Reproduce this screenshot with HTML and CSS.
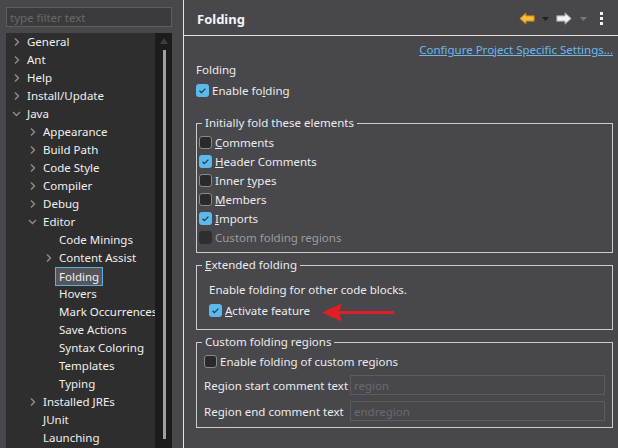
FILE: index.html
```html
<!DOCTYPE html>
<html>
<head>
<meta charset="utf-8">
<link rel="stylesheet" href="styles.css">
</head>
<body>
<div class="app">
  <aside class="side">
    <input class="filter" type="text" placeholder="type filter text">
    <div class="tree">
      <ul class="rows">
        <li class="row l0"><span class="tw"><svg width="6" height="10" viewBox="0 0 6 10"><polyline points="1,1.5 4.5,5 1,8.5" class="chev"/></svg></span>General</li>
        <li class="row l0"><span class="tw"><svg width="6" height="10" viewBox="0 0 6 10"><polyline points="1,1.5 4.5,5 1,8.5" class="chev"/></svg></span>Ant</li>
        <li class="row l0"><span class="tw"><svg width="6" height="10" viewBox="0 0 6 10"><polyline points="1,1.5 4.5,5 1,8.5" class="chev"/></svg></span>Help</li>
        <li class="row l0"><span class="tw"><svg width="6" height="10" viewBox="0 0 6 10"><polyline points="1,1.5 4.5,5 1,8.5" class="chev"/></svg></span>Install/Update</li>
        <li class="row l0"><span class="tw open"><svg width="9" height="6" viewBox="0 0 9 6"><polyline points="1,1 4.5,4.5 8,1" class="chev"/></svg></span>Java</li>
        <li class="row l1"><span class="tw"><svg width="6" height="10" viewBox="0 0 6 10"><polyline points="1,1.5 4.5,5 1,8.5" class="chev"/></svg></span>Appearance</li>
        <li class="row l1"><span class="tw"><svg width="6" height="10" viewBox="0 0 6 10"><polyline points="1,1.5 4.5,5 1,8.5" class="chev"/></svg></span>Build Path</li>
        <li class="row l1"><span class="tw"><svg width="6" height="10" viewBox="0 0 6 10"><polyline points="1,1.5 4.5,5 1,8.5" class="chev"/></svg></span>Code Style</li>
        <li class="row l1"><span class="tw"><svg width="6" height="10" viewBox="0 0 6 10"><polyline points="1,1.5 4.5,5 1,8.5" class="chev"/></svg></span>Compiler</li>
        <li class="row l1"><span class="tw"><svg width="6" height="10" viewBox="0 0 6 10"><polyline points="1,1.5 4.5,5 1,8.5" class="chev"/></svg></span>Debug</li>
        <li class="row l1"><span class="tw open"><svg width="9" height="6" viewBox="0 0 9 6"><polyline points="1,1 4.5,4.5 8,1" class="chev"/></svg></span>Editor</li>
        <li class="row l2"><span class="tw"></span>Code Minings</li>
        <li class="row l2"><span class="tw"><svg width="6" height="10" viewBox="0 0 6 10"><polyline points="1,1.5 4.5,5 1,8.5" class="chev"/></svg></span>Content Assist</li>
        <li class="row l2"><span class="tw"></span><span class="sel">Folding</span></li>
        <li class="row l2"><span class="tw"></span>Hovers</li>
        <li class="row l2"><span class="tw"></span>Mark Occurrences</li>
        <li class="row l2"><span class="tw"></span>Save Actions</li>
        <li class="row l2"><span class="tw"></span>Syntax Coloring</li>
        <li class="row l2"><span class="tw"></span>Templates</li>
        <li class="row l2"><span class="tw"></span>Typing</li>
        <li class="row l1"><span class="tw"><svg width="6" height="10" viewBox="0 0 6 10"><polyline points="1,1.5 4.5,5 1,8.5" class="chev"/></svg></span>Installed JREs</li>
        <li class="row l1"><span class="tw"></span>JUnit</li>
        <li class="row l1"><span class="tw"></span>Launching</li>
      </ul>
      <div class="vscroll"><span class="up"></span><span class="thumb"></span></div>
    </div>
  </aside>

  <main class="page">
    <header class="head">
      <h1 class="title">Folding</h1>
      <div class="nav">
        <svg class="back" width="16" height="13" viewBox="0 0 16 13"><polygon points="0.8,6.5 7,0.8 7,3.8 15.2,3.8 15.2,9.2 7,9.2 7,12.2" fill="#f7bb3f" stroke="#b57613" stroke-width="1"/></svg>
        <svg class="dd" width="7" height="4" viewBox="0 0 7 4"><polygon points="0,0 7,0 3.5,4" fill="#1f1f21"/></svg>
        <svg class="fwd" width="16" height="13" viewBox="0 0 16 13"><polygon points="15.2,6.5 9,0.8 9,3.8 0.8,3.8 0.8,9.2 9,9.2 9,12.2" fill="#f2f2f2" stroke="#9c9c9c" stroke-width="1"/></svg>
        <svg class="dd" width="7" height="4" viewBox="0 0 7 4"><polygon points="0,0 7,0 3.5,4" fill="#78787c"/></svg>
        <svg class="dots" width="3" height="13" viewBox="0 0 3 13"><rect x="0" y="0" width="3" height="3" fill="#f2f2f2"/><rect x="0" y="5" width="3" height="3" fill="#f2f2f2"/><rect x="0" y="10" width="3" height="3" fill="#f2f2f2"/></svg>
      </div>
    </header>

    <div class="content">
      <a class="link">Configure Project Specific Settings...</a>
      <div class="lbl">Folding</div>
      <div class="check top"><span class="box on"><svg width="13" height="13" viewBox="0 0 13 13"><polyline points="3.5,6.8 5.4,8.6 9.4,4.6" class="tick"/></svg></span><span>Enable fo<u>l</u>ding</span></div>

      <fieldset class="grp">
        <legend>Initially fold these elements</legend>
        <div class="in1">
          <div class="check r19"><span class="box"></span><span><u>C</u>omments</span></div>
          <div class="check r19"><span class="box on"><svg width="13" height="13" viewBox="0 0 13 13"><polyline points="3.5,6.8 5.4,8.6 9.4,4.6" class="tick"/></svg></span><span><u>H</u>eader Comments</span></div>
          <div class="check r19"><span class="box"></span><span>Inner <u>t</u>ypes</span></div>
          <div class="check r19"><span class="box"></span><span><u>M</u>embers</span></div>
          <div class="check r19"><span class="box on"><svg width="13" height="13" viewBox="0 0 13 13"><polyline points="3.5,6.8 5.4,8.6 9.4,4.6" class="tick"/></svg></span><span><u>I</u>mports</span></div>
          <div class="check r19 dis"><span class="box off"></span><span>Custom folding regions</span></div>
        </div>
      </fieldset>

      <fieldset class="grp g2">
        <legend><u>E</u>xtended folding</legend>
        <div class="in2">
          <div class="txt">Enable folding for other code blocks.</div>
          <div class="check act"><span class="box on"><svg width="13" height="13" viewBox="0 0 13 13"><polyline points="3.5,6.8 5.4,8.6 9.4,4.6" class="tick"/></svg></span><span><u>A</u>ctivate feature</span>
            <svg class="redarrow" width="72" height="20" viewBox="0 0 72 20"><polygon points="0,9.5 20,0.5 17,9.5 20,18.5" fill="#e11d25"/><rect x="17" y="8" width="55" height="3" fill="#e11d25"/></svg>
          </div>
        </div>
      </fieldset>

      <fieldset class="grp g3">
        <legend>Custom folding regions</legend>
        <div class="in3">
          <div class="check"><span class="box"></span><span>Enable folding of custom regions</span></div>
          <div class="field f1"><span>Region start comment text</span><input type="text" placeholder="region"></div>
          <div class="field f2"><span>Region end comment text</span><input type="text" placeholder="endregion"></div>
        </div>
      </fieldset>
    </div>
  </main>
</div>
</body>
</html>
```

FILE: styles.css
```css
* { box-sizing: border-box; margin: 0; padding: 0; }
html, body { width: 618px; height: 448px; overflow: hidden; }
body {
  background: #48474c;
  font-family: "Noto Sans", "Open Sans", sans-serif;
  font-size: 11.5px;
  color: #ececec;
}
.app { display: flex; height: 448px; }

/* left side */
.side {
  width: 184px;
  flex: none;
  border-right: 1px solid #e2e2e2;
  padding: 7px 11px 0 6px;
  display: flex;
  flex-direction: column;
  gap: 6px;
}
.filter {
  height: 20px;
  border: 1px solid #5e5e60;
  background: #3b3b3d;
  color: #ddd;
  font: inherit;
  padding: 0 3px;
  outline: none;
}
.filter::placeholder { color: #68686a; }
.tree {
  flex: 1;
  min-height: 0;
  display: flex;
  background: #2e2e2e;
  overflow: hidden;
}
.rows {
  flex: 1;
  list-style: none;
  overflow: hidden;
  white-space: nowrap;
  color: #f0f0f0;
  padding-top: 0;
}
.row { height: 18px; display: flex; align-items: center; padding-bottom: 1px; }
.l0 { padding-left: 4px; }
.l1 { padding-left: 20px; }
.l2 { padding-left: 36px; }
.tw { width: 17px; flex: none; display: flex; align-items: center; padding-left: 4px; }
.tw.open { padding-left: 2px; }
.chev { fill: none; stroke: #8e8e8e; stroke-width: 1.4; }
.sel {
  margin-left: -4px;
  margin-top: 1px;
  height: 19px;
  line-height: 17px;
  padding: 0 3px;
  border: 1px solid #5aaee2;
  background: #56565a;
}
.vscroll {
  width: 17px;
  flex: none;
  background: #1c1c1c;
  display: flex;
  flex-direction: column;
  align-items: flex-start;
}
.up {
  margin: 5px 0 0 5px;
  width: 0; height: 0;
  border-left: 4px solid transparent;
  border-right: 4px solid transparent;
  border-bottom: 6px solid #3d3d3d;
}
.thumb {
  margin: 6px 0 0 8px;
  width: 3px;
  height: 389px;
  background: #a0a0a0;
}

/* right page */
.page { flex: 1; display: flex; flex-direction: column; min-width: 0; }
.head {
  height: 36px;
  border-bottom: 1px solid #e0e0e0;
  padding: 2px 15px 0 13px;
  display: flex;
  align-items: center;
  justify-content: space-between;
}
.title { font-size: 13px; font-weight: 700; color: #f4f4f4; }
.nav { display: flex; align-items: center; }
.nav svg { display: block; }
.back { margin-right: 7px; }
.dd { margin-right: 7px; }
.fwd { margin-right: 8px; }
.nav .dd + .dots { margin-left: 6px; }

.content {
  display: flex;
  flex-direction: column;
  padding: 0 5px 0 12px;
}
.link {
  align-self: flex-end;
  margin-top: 6px;
  line-height: 16px;
  color: #6ab9ec;
  text-decoration: underline;
}
.lbl { margin-top: 4px; line-height: 16px; }
.check {
  height: 18px;
  display: flex;
  align-items: center;
  gap: 3px;
  white-space: nowrap;
}
.check.top { margin-top: 3px; }
.r19 { height: 19px; }
.box {
  width: 13px;
  height: 13px;
  flex: none;
  border: 1px solid #8a8a8c;
  border-radius: 3px;
  background: #2a2a2a;
  display: block;
}
.box.on { border: none; background: #5bb9ec; }
.box.on svg { display: block; }
.box.off { border-color: #2e2e2e; background: #2e2e2e; }
.tick { fill: none; stroke: #1c3a52; stroke-width: 1.2; }
.dis { color: #9c9c9e; }

.grp {
  border: 1px solid #cdcdcd;
  margin-top: 16px;
  padding: 0;
  min-width: 0;
}
.grp legend {
  margin-left: 5px;
  padding: 0 3px;
  line-height: 16px;
}
.g2, .g3 { margin-top: 4px; }
.in1 { padding: 2px 0 5px 2px; }
.in2 { padding: 8px 0 10px 12px; }
.in3 { padding: 2px 7px 6px 7px; }
.txt { line-height: 18px; }
.act { margin-top: 2px; position: relative; }
.redarrow { position: absolute; left: 113px; top: 2px; }

.field {
  display: grid;
  grid-template-columns: 146px 1fr;
  align-items: center;
}
.f1 { margin-top: 5px; }
.f2 { margin-top: 6px; }
.field input {
  height: 20px;
  border: 1px solid #5c5c60;
  background: transparent;
  color: #ddd;
  font: inherit;
  padding: 0 3px;
  outline: none;
}
.field input::placeholder { color: #6a6a6e; }
```
